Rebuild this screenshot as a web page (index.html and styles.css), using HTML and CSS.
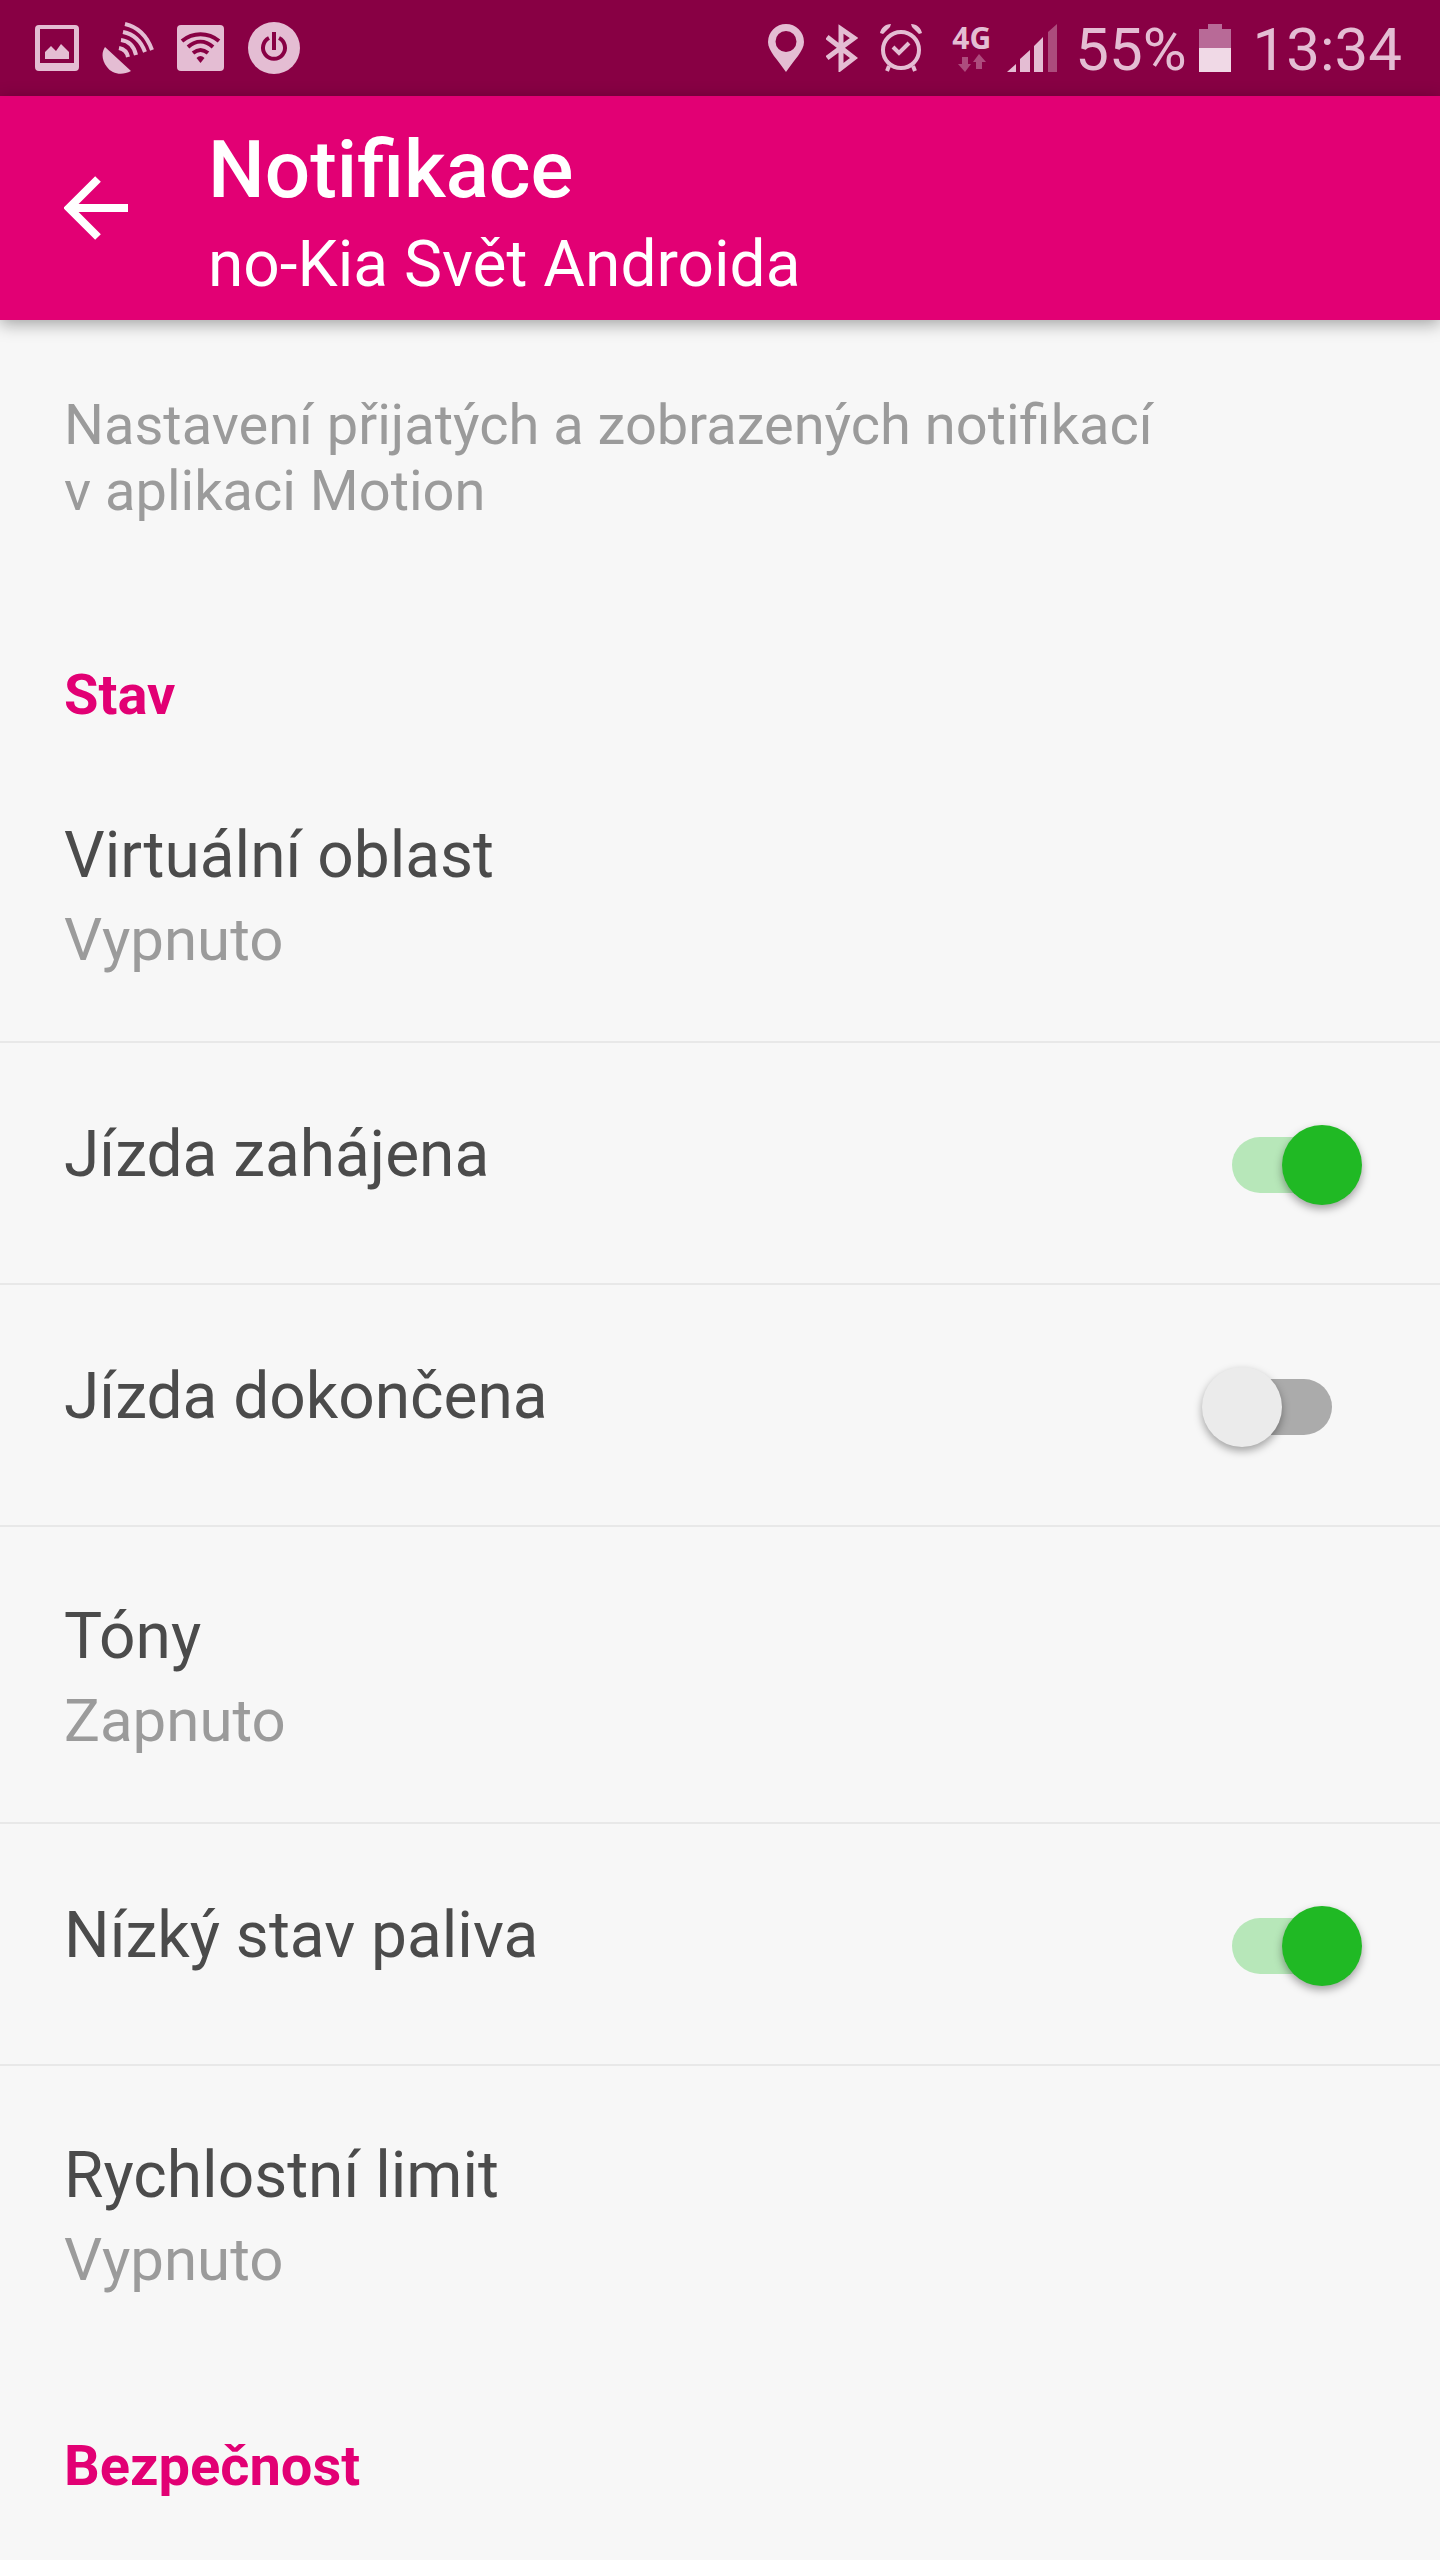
FILE: index.html
```html
<!DOCTYPE html>
<html lang="cs">
<head>
<meta charset="utf-8">
<meta name="viewport" content="width=device-width, initial-scale=1">
<title>Notifikace</title>
<link rel="stylesheet" href="styles.css">
</head>
<body>
<div class="status-bar">
  <div class="status-left">
    <svg class="icon" width="44" height="52" viewBox="0 0 44 52" aria-hidden="true"><path fill-rule="evenodd" d="M4 3h36a4 4 0 0 1 4 4v38a4 4 0 0 1-4 4H4a4 4 0 0 1-4-4V7a4 4 0 0 1 4-4zM5 7v34h34V7z"/><path d="M10 37v-7l6-6 5 5 5-7 8 8v7z"/></svg>
    <svg class="icon" width="52" height="52" viewBox="0 0 52 52" aria-hidden="true"><path d="M3 25 29 49C20 54 10 52 5 45 0 39-1 31 3 25z"/><g class="stroke" stroke-width="4"><path d="M23 2c13 3 22 12 27 26"/><path d="M21 10c10 2 18 9 22 20"/><path d="M19 18c8 1 13 6 15 15"/><path d="M17 26c5 1 8 4 9 9"/></g></svg>
    <svg class="icon" width="48" height="52" viewBox="0 0 48 52" aria-hidden="true"><rect x="0" y="3" width="47" height="46" rx="4"/><g class="cutout" stroke-width="4"><path d="M5 19c11-9 26-9 37 0"/><path d="M11 25c8-7 17-7 25 0"/><path d="M16 31c5-4 10-4 15 0"/></g><path class="hole" d="M23.500 41l-4-5q4-4 8 0z"/></svg>
    <svg class="icon" width="52" height="52" viewBox="0 0 52 52" aria-hidden="true"><circle cx="26" cy="26" r="26"/><g class="cutout" stroke-width="4"><path d="M21 16a11 11 0 1 0 10 0"/><path d="M26 10v18"/></g></svg>
  </div>
  <div class="status-right">
    <svg class="icon" width="36" height="48" viewBox="0 0 36 48" aria-hidden="true"><path fill-rule="evenodd" d="M18 0a18 18 0 0 1 18 18c0 9-10 18-18 30C10 36 0 27 0 18A18 18 0 0 1 18 0zm0 7a10.500 10.500 0 1 0 0 21 10.500 10.500 0 0 0 0-21z"/></svg>
    <svg class="icon" width="32" height="48" viewBox="0 0 32 48" aria-hidden="true"><path class="stroke" stroke-width="5" d="M1 13 28 34 15 44V5l13 9L1 34"/></svg>
    <svg class="icon icon-alarm" width="42" height="48" viewBox="0 0 42 48" aria-hidden="true"><circle class="stroke" stroke-width="4" cx="21" cy="26" r="18"/><path class="stroke" stroke-width="4" d="M13 23l6 6 10-10M9 42l-2 5M33 42l2 5"/><path d="M0 9C1 4 5 0 11 0L10 3 3 10zM42 9C41 4 37 0 31 0l1 3 7 7z"/></svg>
    <div class="network">
      <span class="network-type">4G</span>
      <svg class="icon faded" width="30" height="18" viewBox="0 0 30 18" aria-hidden="true"><path d="M5 3h6v7h3l-6 8-7-8h4zM19 15h6V8h4l-7-8-6 8h3z"/></svg>
    </div>
    <svg class="icon icon-signal" width="50" height="48" viewBox="0 0 50 48" aria-hidden="true"><path d="M0 48l9-8v8zM13 48V35l10-9v22zM27 48V22l9-9v35z"/><path class="faded" d="M41 48V8l9-8v48z"/></svg>
    <span class="status-text">55%</span>
    <svg class="icon icon-battery" width="32" height="48" viewBox="0 0 32 48" aria-hidden="true"><path class="battery-empty" d="M9 0h14v5h9v19H0V5h9z"/><path class="battery-full" d="M0 24h32v24H0z"/></svg>
    <time class="status-text">13:34</time>
  </div>
</div>

<header class="app-bar">
  <button class="back" type="button" aria-label="Zpět">
    <svg width="64" height="64" viewBox="0 0 64 64" aria-hidden="true"><path d="M34 3 5 32l29 29M5 32h59"/></svg>
  </button>
  <div class="heading">
    <h1 class="title">Notifikace</h1>
    <p class="subtitle">no-Kia Svět Androida</p>
  </div>
</header>

<main class="settings">
  <p class="intro">Nastavení přijatých a zobrazených notifikací v&nbsp;aplikaci Motion</p>

  <section>
    <h2 class="section-title">Stav</h2>
    <ul class="list">
      <li class="row">
        <button class="item" type="button"><span class="label">Virtuální oblast</span><span class="value">Vypnuto</span></button>
      </li>
      <li class="row">
        <label class="item item-switch"><span class="label">Jízda zahájena</span><input class="switch" type="checkbox" role="switch" checked></label>
      </li>
      <li class="row">
        <label class="item item-switch"><span class="label">Jízda dokončena</span><input class="switch" type="checkbox" role="switch"></label>
      </li>
      <li class="row">
        <button class="item" type="button"><span class="label">Tóny</span><span class="value">Zapnuto</span></button>
      </li>
      <li class="row">
        <label class="item item-switch"><span class="label">Nízký stav paliva</span><input class="switch" type="checkbox" role="switch" checked></label>
      </li>
      <li class="row">
        <button class="item" type="button"><span class="label">Rychlostní limit</span><span class="value">Vypnuto</span></button>
      </li>
    </ul>
  </section>

  <section>
    <h2 class="section-title">Bezpečnost</h2>
  </section>
</main>
</body>
</html>
```
FILE: styles.css
```css
:root {
  --magenta: #e20074;
  --magenta-dark: #880044;
  --status-ink: #e4bdd3;
  --page: #f7f7f7;
  --ink: #4b4b4b;
  --muted: #9b9b9b;
  --green: #20b924;
}

* {
  box-sizing: border-box;
}

body {
  margin: 0;
  background: var(--page);
  color: var(--ink);
  font-family: Roboto, "Liberation Sans", sans-serif;
}

h1, h2, p, ul {
  margin: 0;
  padding: 0;
}

button {
  border: 0;
  padding: 0;
  background: none;
  color: inherit;
  font: inherit;
  text-align: left;
}

/* Status bar */
.status-bar {
  display: flex;
  justify-content: space-between;
  align-items: center;
  height: 96px;
  padding: 0 38px 0 35px;
  background: var(--magenta-dark);
  color: var(--status-ink);
}

.status-left,
.status-right {
  display: flex;
  align-items: center;
}

.status-left {
  gap: 23px;
}

.status-right {
  gap: 22px;
}

.icon {
  display: block;
  flex: none;
  fill: currentColor;
}

.stroke {
  fill: none;
  stroke: currentColor;
}

.cutout {
  fill: none;
  stroke: var(--magenta-dark);
}

.hole {
  fill: var(--magenta-dark);
}

.faded {
  opacity: 0.4;
}

.icon-alarm {
  margin-right: 8px;
}

.network {
  display: flex;
  flex-direction: column;
  align-items: center;
  gap: 2px;
  margin-right: -6px;
}

.network-type {
  font: 700 30px/28px "Open Sans", sans-serif;
}

.icon-signal {
  margin-right: -4px;
}

.status-text {
  padding-top: 4px;
  font-size: 60px;
  line-height: 72px;
}

.icon-battery {
  margin-left: -10px;
}

.battery-empty {
  fill: #b86a97;
}

.battery-full {
  fill: #f0d9e6;
}

/* App bar */
.app-bar {
  position: relative;
  display: flex;
  align-items: center;
  gap: 80px;
  height: 224px;
  padding: 0 64px;
  background: var(--magenta);
  box-shadow: 0 4px 16px rgba(0, 0, 0, 0.35);
  color: #fff;
}

.back svg {
  display: block;
  fill: none;
  stroke: currentColor;
  stroke-width: 8px;
}

.heading {
  padding-top: 14px;
}

.title {
  font-size: 80px;
  font-weight: 500;
  line-height: 100px;
}

.subtitle {
  font-size: 64px;
  line-height: 90px;
}

/* Settings */
.intro {
  max-width: 1280px;
  padding: 72px 64px 66px;
  color: var(--muted);
  font-size: 56px;
  line-height: 66px;
}

.section-title {
  padding: 72px 64px 18px;
  color: var(--magenta);
  font-size: 56px;
  font-weight: 700;
  line-height: 66px;
}

.list {
  list-style: none;
}

.row + .row {
  border-top: 2px solid #e8e8e8;
}

.item {
  display: flex;
  flex-direction: column;
  gap: 4px;
  width: 100%;
  padding: 72px 64px 59px;
}

.item-switch {
  flex-direction: row;
  justify-content: space-between;
  min-height: 240px;
  padding: 74px 108px 70px 64px;
}

.label {
  font-size: 64px;
  line-height: 76px;
}

.value {
  color: var(--muted);
  font-size: 60px;
  line-height: 84px;
}

.switch {
  position: relative;
  flex: none;
  align-self: center;
  appearance: none;
  width: 100px;
  height: 56px;
  margin: 0;
  border-radius: 28px;
  background: #ababab;
}

.switch::before {
  content: "";
  position: absolute;
  top: -12px;
  left: -30px;
  width: 80px;
  height: 80px;
  border-radius: 50%;
  background: #ebebeb;
  box-shadow: 0 4px 8px rgba(0, 0, 0, 0.35);
}

.switch:checked {
  background: #b7e7b9;
}

.switch:checked::before {
  left: 50px;
  background: var(--green);
}
```
